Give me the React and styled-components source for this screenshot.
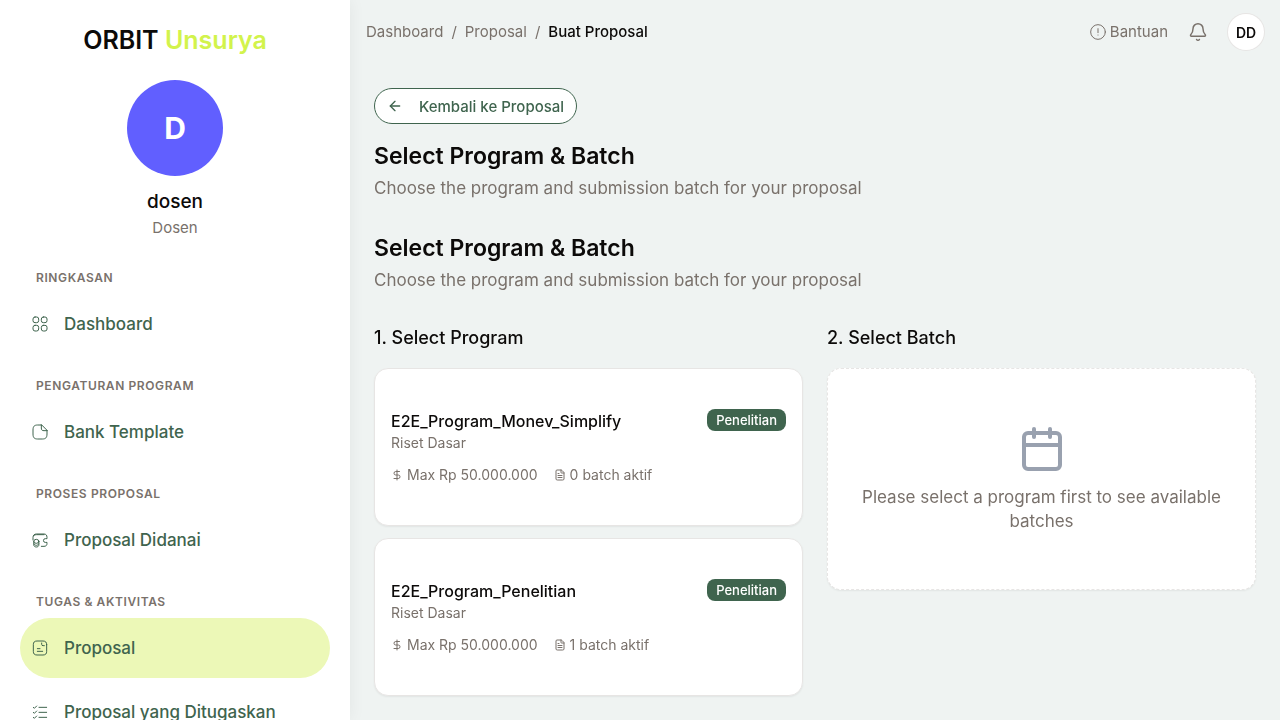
import React from "react";
import styled, { createGlobalStyle } from "styled-components";
import { ArrowLeft, Bell, Calendar, DollarSign, FileText } from "lucide-react";

const GlobalStyle = createGlobalStyle`
  * {
    box-sizing: border-box;
  }

  body {
    margin: 0;
    background-color: #eff3f2;
    color: #0c0a09;
    font-family: "Inter", sans-serif;
    font-size: 17px;
    line-height: 24px;
  }

  h1, h2, h3, h4, p, ul, ol {
    margin: 0;
    padding: 0;
  }

  ul, ol {
    list-style: none;
  }

  a {
    color: inherit;
    text-decoration: none;
  }

  button {
    font-family: inherit;
    cursor: pointer;
  }
`;

const Layout = styled.div`
  display: flex;
  height: 100vh;
`;

const Sidebar = styled.aside`
  display: flex;
  flex-direction: column;
  flex: 0 0 350px;
  padding: 24px 20px;
  background-color: white;
  box-shadow: 0 0 16px rgba(0, 0, 0, 0.06);
  overflow-y: auto;
  scrollbar-width: none;
`;

const Logo = styled.h1`
  font-size: 25px;
  line-height: 32px;
  font-weight: 600;
  text-align: center;

  span {
    color: #d2f34c;
  }
`;

const Profile = styled.div`
  display: flex;
  flex-direction: column;
  align-items: center;
  margin: 24px 0 32px;
`;

const Avatar = styled.div`
  display: flex;
  align-items: center;
  justify-content: center;
  width: 96px;
  height: 96px;
  margin-bottom: 12px;
  border-radius: 50%;
  background-color: #615fff;
  color: white;
  font-size: 30px;
  font-weight: 700;
`;

const UserName = styled.p`
  font-size: 19px;
  line-height: 28px;
  font-weight: 500;
`;

const UserRole = styled.p`
  margin-top: 2px;
  color: #79716b;
  font-size: 15px;
  line-height: 20px;
`;

const Menu = styled.nav`
  display: flex;
  flex-direction: column;
  gap: 24px;
`;

const MenuTitle = styled.h2`
  padding: 0 16px;
  margin-bottom: 8px;
  color: #79716b;
  font-size: 12px;
  line-height: 16px;
  font-weight: 600;
  letter-spacing: 0.05em;
  text-transform: uppercase;
`;

const MenuList = styled.ul`
  display: flex;
  flex-direction: column;
  gap: 4px;
`;

const MenuLink = styled.a`
  display: flex;
  align-items: center;
  gap: 16px;
  height: 60px;
  padding: 0 12px;
  border-radius: 30px;
  background-color: ${(props) => (props.$active ? "#ecf8b7" : "transparent")};
  color: #3f644e;
  font-weight: 500;
`;

const Content = styled.div`
  flex: 1;
  min-width: 0;
  overflow: auto;
`;

const Header = styled.header`
  display: flex;
  align-items: center;
  justify-content: space-between;
  height: 64px;
  padding: 0 16px;
`;

const Breadcrumb = styled.ol`
  display: flex;
  gap: 8px;
  color: #79716b;
  font-size: 15px;
  line-height: 20px;

  [aria-current] {
    color: #0c0a09;
    font-weight: 500;
  }
`;

const HeaderActions = styled.div`
  display: flex;
  align-items: center;
  gap: 20px;
  color: #79716b;
`;

const HelpLink = styled.a`
  display: flex;
  align-items: center;
  gap: 4px;
  font-size: 15px;
  line-height: 20px;
`;

const IconButton = styled.button`
  display: flex;
  padding: 0;
  border: none;
  background: none;
  color: inherit;
`;

const UserButton = styled.button`
  width: 36px;
  height: 36px;
  padding: 0;
  border: none;
  border-radius: 50%;
  background-color: white;
  box-shadow: 0 0 0 1px #e7e5e4;
  color: #0c0a09;
  font-size: 14px;
  font-weight: 600;
`;

const Main = styled.main`
  display: flex;
  flex-direction: column;
  padding: 24px;
`;

const BackButton = styled.button`
  display: flex;
  align-items: center;
  align-self: flex-start;
  gap: 16px;
  height: 36px;
  margin-bottom: 16px;
  padding: 0 12px;
  border: 1px solid #3f644e;
  border-radius: 18px;
  background-color: white;
  color: #3f644e;
  font-size: 15px;
  font-weight: 500;
`;

const Heading = styled.div`
  margin-bottom: 32px;

  h2 {
    margin-bottom: 4px;
    font-size: 23px;
    line-height: 32px;
    font-weight: 600;
  }

  p {
    color: #79716b;
  }
`;

const Columns = styled.div`
  display: grid;
  grid-template-columns: repeat(2, minmax(0, 1fr));
  align-items: start;
  gap: 24px;
`;

const ColumnTitle = styled.h3`
  margin-bottom: 16px;
  font-size: 18px;
  line-height: 28px;
  font-weight: 500;
`;

const ProgramList = styled.div`
  display: flex;
  flex-direction: column;
  gap: 12px;
`;

const Card = styled.article`
  padding: 40px 16px;
  border: 1px solid #e7e5e4;
  border-radius: 14px;
  background-color: white;
  box-shadow: 0 1px 2px rgba(0, 0, 0, 0.06);
`;

const CardTop = styled.div`
  display: flex;
  align-items: flex-start;
  justify-content: space-between;

  h4 {
    font-size: 16px;
    font-weight: 500;
  }

  p {
    color: #79716b;
    font-size: 14px;
    line-height: 20px;
  }
`;

const Badge = styled.span`
  padding: 3px 9px;
  border-radius: 8px;
  background-color: #3f644e;
  color: white;
  font-size: 13px;
  line-height: 16px;
  font-weight: 500;
`;

const Meta = styled.div`
  display: flex;
  gap: 16px;
  margin-top: 12px;
  color: #79716b;
  font-size: 14px;
  line-height: 20px;

  span {
    display: flex;
    align-items: center;
    gap: 4px;
  }
`;

const EmptyCard = styled(Card)`
  display: flex;
  flex-direction: column;
  align-items: center;
  gap: 12px;
  padding: 56px 32px;
  border-style: dashed;
  color: #79716b;
  text-align: center;

  svg {
    color: #99a1af;
  }
`;

const LineIcon = ({ size = 16, children }) => (
  <svg
    width={size}
    height={size}
    viewBox="0 0 24 24"
    fill="none"
    stroke="currentColor"
    strokeWidth="1.5"
    strokeLinecap="round"
    strokeLinejoin="round"
    aria-hidden="true"
  >
    {children}
  </svg>
);

const GridIcon = () => (
  <LineIcon>
    <rect x="1.5" y="1.5" width="8.5" height="8.5" rx="3" />
    <rect x="14" y="1.5" width="8.5" height="8.5" rx="3" />
    <rect x="1.5" y="14" width="8.5" height="8.5" rx="3" />
    <rect x="14" y="14" width="8.5" height="8.5" rx="3" />
  </LineIcon>
);

const NoteIcon = () => (
  <LineIcon>
    <path d="M22.5 10v5c0 5.5-2 7.5-7 7.5h-7c-5 0-7-2-7-7.5V9c0-5.5 2-7.5 7-7.5H14" />
    <path d="M22.5 10H18c-3 0-4-1-4-4V1.5Z" />
  </LineIcon>
);

const WalletIcon = () => (
  <LineIcon>
    <path d="M1.500 12V8c0-3 2-5 5-5h11.500c3 0 4.500 2 4.500 5v2H20a2.800 2.800 0 0 0 0 5.600h2.500V17c0 3-1.500 4.500-4.500 4.500h-4" />
    <path d="M3 5.500c1-1 2-1.500 4-1.500h11" />
    <ellipse cx="6.500" cy="14" rx="3.800" ry="3" />
    <path d="M2.700 14v5.500c0 1.700 1.700 3 3.800 3s3.800-1.300 3.800-3V14" />
    <path d="M3 18c.5 1 1.900 2 3.500 2s3-1 3.500-2" />
  </LineIcon>
);

const DocumentIcon = () => (
  <LineIcon>
    <path d="M22 7v10c0 3.5-1.500 5.500-5.500 5.500h-9C3.500 22.500 2 20.500 2 17V7c0-3.500 1.500-5.500 5.500-5.500h9C20.500 1.500 22 3.500 22 7Z" />
    <path d="M14.500 4.500v2a2 2 0 0 0 2 2h2" />
    <path d="M8 13h4M8 17h8" />
  </LineIcon>
);

const TaskIcon = () => (
  <LineIcon>
    <path d="M10.500 5h11.500M10.500 12.500h11.500M10.500 20h11.500" />
    <path d="m2 5 1.500 1.500L7 3M2 12.500 3.500 14 7 10.500M2 20l1.500 1.500L7 18" />
  </LineIcon>
);

const InfoIcon = () => (
  <LineIcon>
    <circle cx="12" cy="12" r="11" />
    <path d="M12 7v6M12 16.500v.1" />
  </LineIcon>
);

const menu = [
  { title: "Ringkasan", items: [{ label: "Dashboard", icon: <GridIcon /> }] },
  { title: "Pengaturan Program", items: [{ label: "Bank Template", icon: <NoteIcon /> }] },
  { title: "Proses Proposal", items: [{ label: "Proposal Didanai", icon: <WalletIcon /> }] },
  {
    title: "Tugas & Aktivitas",
    items: [
      { label: "Proposal", icon: <DocumentIcon />, active: true },
      { label: "Proposal yang Ditugaskan", icon: <TaskIcon /> },
    ],
  },
];

const programs = [
  { name: "E2E_Program_Monev_Simplify", batches: 0 },
  { name: "E2E_Program_Penelitian", batches: 1 },
];

const PageHeading = () => (
  <Heading>
    <h2>Select Program &amp; Batch</h2>
    <p>Choose the program and submission batch for your proposal</p>
  </Heading>
);

export default function App() {
  return (
    <Layout>
      <GlobalStyle />
      <Sidebar>
        <Logo>
          ORBIT <span>Unsurya</span>
        </Logo>
        <Profile>
          <Avatar>D</Avatar>
          <UserName>dosen</UserName>
          <UserRole>Dosen</UserRole>
        </Profile>
        <Menu>
          {menu.map((group) => (
            <section key={group.title}>
              <MenuTitle>{group.title}</MenuTitle>
              <MenuList>
                {group.items.map((item) => (
                  <li key={item.label}>
                    <MenuLink href="#" $active={item.active}>
                      {item.icon}
                      {item.label}
                    </MenuLink>
                  </li>
                ))}
              </MenuList>
            </section>
          ))}
        </Menu>
      </Sidebar>
      <Content>
        <Header>
          <Breadcrumb>
            <li><a href="#">Dashboard</a></li>
            <li>/</li>
            <li><a href="#">Proposal</a></li>
            <li>/</li>
            <li aria-current="page">Buat Proposal</li>
          </Breadcrumb>
          <HeaderActions>
            <HelpLink href="#">
              <InfoIcon />
              Bantuan
            </HelpLink>
            <IconButton aria-label="Notifikasi">
              <Bell size={20} strokeWidth={1.75} />
            </IconButton>
            <UserButton>DD</UserButton>
          </HeaderActions>
        </Header>
        <Main>
          <BackButton>
            <ArrowLeft size={16} />
            Kembali ke Proposal
          </BackButton>
          <PageHeading />
          <PageHeading />
          <Columns>
            <section>
              <ColumnTitle>1. Select Program</ColumnTitle>
              <ProgramList>
                {programs.map((program) => (
                  <Card key={program.name}>
                    <CardTop>
                      <div>
                        <h4>{program.name}</h4>
                        <p>Riset Dasar</p>
                      </div>
                      <Badge>Penelitian</Badge>
                    </CardTop>
                    <Meta>
                      <span>
                        <DollarSign size={12} />
                        Max Rp 50.000.000
                      </span>
                      <span>
                        <FileText size={12} />
                        {program.batches} batch aktif
                      </span>
                    </Meta>
                  </Card>
                ))}
              </ProgramList>
            </section>
            <section>
              <ColumnTitle>2. Select Batch</ColumnTitle>
              <EmptyCard>
                <Calendar size={48} />
                <p>Please select a program first to see available batches</p>
              </EmptyCard>
            </section>
          </Columns>
        </Main>
      </Content>
    </Layout>
  );
}
